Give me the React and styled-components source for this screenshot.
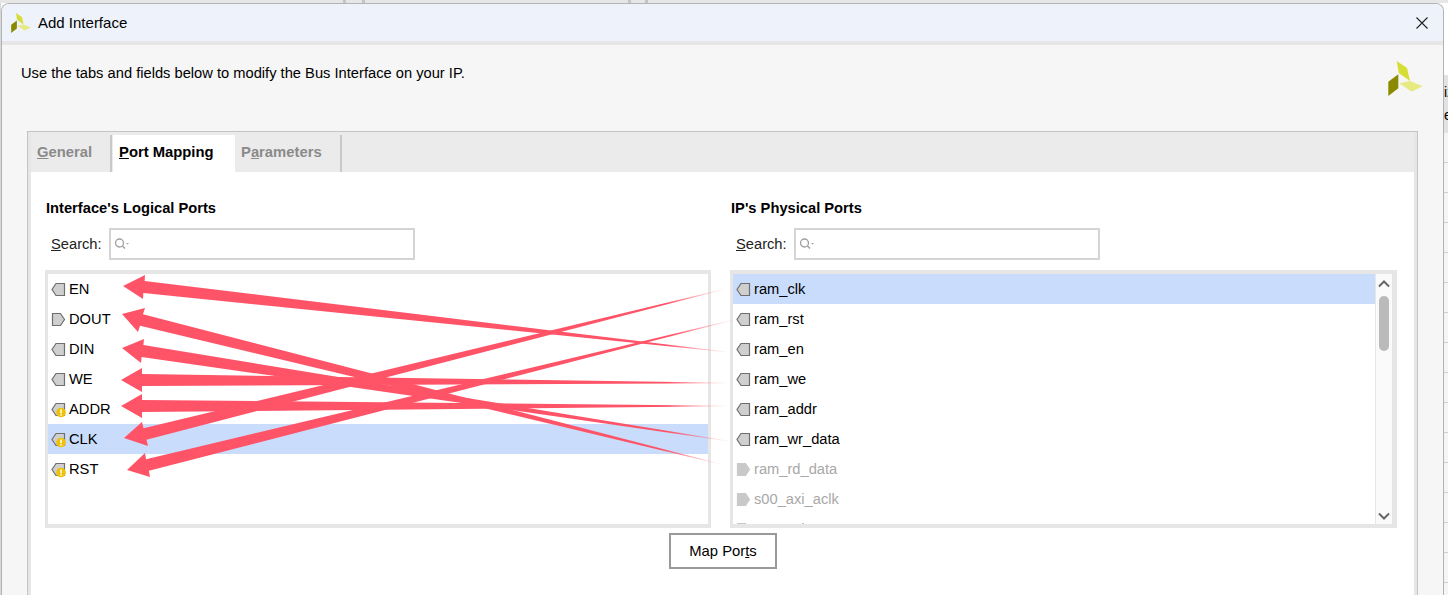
import React from "react";
import styled, { createGlobalStyle } from "styled-components";

const leftPorts = [
  { name: "EN" },
  { name: "DOUT", out: true },
  { name: "DIN" },
  { name: "WE" },
  { name: "ADDR", warn: true },
  { name: "CLK", warn: true, selected: true },
  { name: "RST", warn: true },
];

const rightPorts = [
  { name: "ram_clk", selected: true },
  { name: "ram_rst" },
  { name: "ram_en" },
  { name: "ram_we" },
  { name: "ram_addr" },
  { name: "ram_wr_data" },
  { name: "ram_rd_data", out: true, disabled: true },
  { name: "s00_axi_aclk", out: true, disabled: true },
  { name: "s00_axi_aresetn", out: true, disabled: true },
];

// tip, the two back corners of the head, and the far end of the tail
const arrows = [
  { tip: [123, 286], a: [145, 275], b: [143, 299], end: [727, 352] },
  { tip: [122, 314], a: [145, 308], b: [138, 332], end: [720, 464] },
  { tip: [122, 348], a: [144, 339], b: [141, 363], end: [728, 441] },
  { tip: [121, 380], a: [142, 368], b: [142, 392], end: [727, 383] },
  { tip: [121, 406], a: [142, 394], b: [142, 418], end: [727, 406] },
  { tip: [124, 438], a: [142, 422], b: [148, 446], end: [725, 289] },
  { tip: [127, 470], a: [145, 453], b: [150, 477], end: [733, 320] },
];

function arrowPoints({ tip, a, b, end }) {
  const mid = [(a[0] + b[0]) / 2, (a[1] + b[1]) / 2];
  const dx = end[0] - mid[0];
  const dy = end[1] - mid[1];
  const len = Math.hypot(dx, dy);
  const nx = -dy / len;
  const ny = dx / len;
  const neck = 6;
  const tail = 0.25;
  const pts = [
    tip,
    a,
    [mid[0] - nx * neck, mid[1] - ny * neck],
    [end[0] - nx * tail, end[1] - ny * tail],
    [end[0] + nx * tail, end[1] + ny * tail],
    [mid[0] + nx * neck, mid[1] + ny * neck],
    b,
  ];
  return pts.map((p) => p.join(",")).join(" ");
}

function Arrows() {
  return (
    <ArrowLayer viewBox="0 0 1448 595">
      <defs>
        {arrows.map((item, i) => {
          const fadeX = item.end[0] - (item.end[0] - item.tip[0]) * 0.1;
          const fadeY = item.end[1] - (item.end[1] - item.tip[1]) * 0.1;
          return (
            <linearGradient
              key={i}
              id={`fade${i}`}
              gradientUnits="userSpaceOnUse"
              x1={fadeX}
              y1={fadeY}
              x2={item.end[0]}
              y2={item.end[1]}
            >
              <stop offset="0" stopColor="#ff5468" />
              <stop offset="1" stopColor="#ff5468" stopOpacity="0.05" />
            </linearGradient>
          );
        })}
      </defs>
      {arrows.map((item, i) => (
        <polygon key={i} points={arrowPoints(item)} fill={`url(#fade${i})`} />
      ))}
    </ArrowLayer>
  );
}

function Logo({ size }) {
  return (
    <svg width={size} height={size} viewBox="1388 61 35 35">
      <polygon points="1396.7,61 1407,68 1410,81 1398.7,73" fill="#d6de33" />
      <polygon points="1388.3,81.7 1398.3,74.3 1398.3,88.3 1388.3,96" fill="#8a8a00" />
      <polygon points="1399.3,83.3 1410,81 1422.7,86.3 1411.7,91.7" fill="#e6ea80" />
    </svg>
  );
}

function PortIcon({ out, warn, disabled }) {
  const points = out ? "1.5,1.5 9.5,1.5 13.5,7.5 9.5,13.5 1.5,13.5" : "13.5,1.5 5,1.5 1,7.5 5,13.5 13.5,13.5";
  return (
    <IconBox>
      <svg width="16" height="16" viewBox="0 0 16 16">
        <polygon
          points={points}
          fill={disabled ? "#c9c9c9" : "#cfcfcf"}
          stroke={disabled ? "#c9c9c9" : "#6f6f6f"}
          strokeWidth="1.2"
        />
        {warn && (
          <g>
            <circle cx="10" cy="10.5" r="4.8" fill="#eec208" />
            <rect x="9.3" y="7.5" width="1.5" height="3.8" fill="#fff" />
            <rect x="9.3" y="12.2" width="1.5" height="1.5" fill="#fff" />
          </g>
        )}
      </svg>
    </IconBox>
  );
}

function PortRow({ port }) {
  return (
    <Row $selected={port.selected} $disabled={port.disabled}>
      <PortIcon out={port.out} warn={port.warn} disabled={port.disabled} />
      {port.name}
    </Row>
  );
}

function SearchRow() {
  return (
    <SearchLine>
      <SearchLabel>
        <u>S</u>earch:
      </SearchLabel>
      <SearchBox>
        <svg width="16" height="14" viewBox="0 0 16 14">
          <circle cx="5.5" cy="6" r="4" fill="none" stroke="#a0a0a0" strokeWidth="1.3" />
          <line x1="8.5" y1="9" x2="11" y2="11.5" stroke="#a0a0a0" strokeWidth="1.5" />
          <polygon points="12,6 15,6 13.5,7.5" fill="#a0a0a0" />
        </svg>
      </SearchBox>
    </SearchLine>
  );
}

function App() {
  return (
    <Page>
      <GlobalStyle />
      <TopStrip>
        <Tick $at={343} />
        <Tick $at={362} />
        <Tick $at={628} />
        <Tick $at={645} />
      </TopStrip>
      <Middle>
        <LeftSliver />
        <Dialog>
          <TitleBar>
            <TitleLeft>
              <Logo size={20} />
              <Title>Add Interface</Title>
            </TitleLeft>
            <svg width="14" height="14" viewBox="0 0 14 14">
              <path d="M1.5 1.5 L12.5 12.5 M12.5 1.5 L1.5 12.5" stroke="#222" strokeWidth="1.1" fill="none" />
            </svg>
          </TitleBar>
          <Body>
            <Intro>
              <IntroText>Use the tabs and fields below to modify the Bus Interface on your IP.</IntroText>
              <Logo size={35} />
            </Intro>
            <Pane>
              <TabStrip>
                <Tab>
                  <u>G</u>eneral
                </Tab>
                <Tab $active>
                  <u>P</u>ort Mapping
                </Tab>
                <Tab $last>
                  P<u>a</u>rameters
                </Tab>
              </TabStrip>
              <Content>
                <Columns>
                  <div>
                    <ColumnTitle>Interface's Logical Ports</ColumnTitle>
                    <SearchRow />
                    <ListFrame>
                      <RowList>
                        {leftPorts.map((port) => (
                          <PortRow key={port.name} port={port} />
                        ))}
                      </RowList>
                    </ListFrame>
                  </div>
                  <div>
                    <ColumnTitle>IP's Physical Ports</ColumnTitle>
                    <SearchRow />
                    <ListFrame>
                      <RowList>
                        {rightPorts.map((port) => (
                          <PortRow key={port.name} port={port} />
                        ))}
                      </RowList>
                      <ScrollTrack>
                        <svg width="14" height="10" viewBox="0 0 14 10">
                          <path d="M2 7.5 L7 2.5 L12 7.5" stroke="#666" strokeWidth="2" fill="none" />
                        </svg>
                        <ScrollThumb />
                        <svg width="14" height="10" viewBox="0 0 14 10">
                          <path d="M2 2.5 L7 7.5 L12 2.5" stroke="#666" strokeWidth="2" fill="none" />
                        </svg>
                      </ScrollTrack>
                    </ListFrame>
                  </div>
                </Columns>
                <ButtonLine>
                  <MapButton>
                    Map Por<u>t</u>s
                  </MapButton>
                </ButtonLine>
              </Content>
            </Pane>
          </Body>
        </Dialog>
        <RightSliver>
          <BehindBlank />
          <BehindText>
            <span>iz</span>
            <span>e</span>
          </BehindText>
          <BehindRows>
            {Array.from({ length: 15 }).map((_, i) => (
              <BehindRow key={i} />
            ))}
          </BehindRows>
        </RightSliver>
      </Middle>
      <Arrows />
    </Page>
  );
}

export default App;

const GlobalStyle = createGlobalStyle`
  html, body {
    margin: 0;
    padding: 0;
    background: #fff;
  }
  * {
    box-sizing: border-box;
  }
`;
const Page = styled.div`
  position: relative;
  width: 1448px;
  height: 595px;
  overflow: hidden;
  display: flex;
  flex-direction: column;
  font-family: "Liberation Sans", Arial, sans-serif;
  font-size: 14.7px;
  color: #000;
`;
const TopStrip = styled.div`
  position: relative;
  height: 3px;
  flex: none;
  background: #e6e6e6;
`;
const Tick = styled.div`
  position: absolute;
  top: 0;
  left: ${(p) => p.$at}px;
  width: 3px;
  height: 3px;
  background: #c4c4c4;
`;
const Middle = styled.div`
  flex: 1;
  display: flex;
  min-height: 0;
`;
const LeftSliver = styled.div`
  width: 1px;
  flex: none;
  background: #d8d8d8;
`;
const Dialog = styled.div`
  width: 1443px;
  flex: none;
  display: flex;
  flex-direction: column;
  background: #f6f6f6;
  border: 1px solid #b4b4b4;
  border-bottom: none;
  border-radius: 8px 8px 0 0;
  overflow: hidden;
`;
const TitleBar = styled.div`
  height: 37px;
  flex: none;
  display: flex;
  align-items: center;
  justify-content: space-between;
  padding: 0 14px 0 9px;
  background: #eef2fb;
`;
const TitleLeft = styled.div`
  display: flex;
  align-items: center;
  gap: 7px;
`;
const Title = styled.div`
  font-size: 15px;
`;
const Body = styled.div`
  flex: 1;
  min-height: 0;
  border-top: 4px solid #e6e6e6;
  padding-top: 16px;
`;
const Intro = styled.div`
  height: 70px;
  display: flex;
  align-items: flex-start;
  justify-content: space-between;
  padding: 0 20px 0 19px;
`;
const IntroText = styled.div`
  margin-top: 3px;
  line-height: 18px;
`;
const Pane = styled.div`
  width: 1391px;
  height: 470px;
  margin-left: 25px;
  border: 1px solid #c4c4c4;
  background: #e6e6e6;
  padding: 0 3px;
`;
const TabStrip = styled.div`
  height: 40px;
  display: flex;
  align-items: flex-end;
  background: #ebebeb;
`;
const Tab = styled.div`
  height: 37px;
  display: flex;
  align-items: center;
  font-weight: bold;
  font-size: 14.8px;
  white-space: pre;
  padding: 0 0 4px 6px;
  margin-left: ${(p) => (p.$active ? "1px" : "0")};
  width: ${(p) => (p.$active ? "122px" : p.$last ? "107px" : "81px")};
  color: ${(p) => (p.$active ? "#000" : "#8a8a8a")};
  background: ${(p) => (p.$active ? "#fff" : "transparent")};
  border-right: ${(p) => (p.$active ? "none" : "2px solid #c8c8c8")};
`;
const Content = styled.div`
  height: 430px;
  background: #fff;
  padding: 28px 17px 0 14px;
`;
const Columns = styled.div`
  display: grid;
  grid-template-columns: 666px 667px;
  gap: 19px;
`;
const ColumnTitle = styled.div`
  font-weight: bold;
  line-height: 16px;
  margin-left: 1px;
`;
const SearchLine = styled.div`
  display: flex;
  align-items: center;
  gap: 8px;
  margin: 12px 0 10px 6px;
`;
const SearchLabel = styled.div`
  width: 50px;
  white-space: nowrap;
  color: #222;
`;
const SearchBox = styled.div`
  width: 306px;
  height: 32px;
  border: 2px solid #d4d4d4;
  background: #fff;
  display: flex;
  align-items: center;
  padding-left: 3px;
`;
const ListFrame = styled.div`
  height: 258px;
  border: 4px solid #e6e6e6;
  border-left-width: 3px;
  border-right-width: 3px;
  display: flex;
  overflow: hidden;
`;
const RowList = styled.div`
  flex: 1;
  min-width: 0;
  height: 100%;
  overflow: hidden;
`;
const Row = styled.div`
  height: 30px;
  flex: none;
  display: flex;
  align-items: center;
  padding-left: 3px;
  background: ${(p) => (p.$selected ? "#c9dcfb" : "transparent")};
  color: ${(p) => (p.$disabled ? "#a8a8a8" : "#000")};
`;
const IconBox = styled.span`
  width: 18px;
  height: 16px;
  flex: none;
  display: flex;
  margin-top: 2px;
`;
const ScrollTrack = styled.div`
  width: 19px;
  flex: none;
  background: #fafafa;
  border-left: 1px solid #e6e6e6;
  border-right: 2px solid #e6e6e6;
  display: flex;
  flex-direction: column;
  align-items: center;
  padding: 5px 0 3px;
`;
const ScrollThumb = styled.div`
  width: 10px;
  height: 55px;
  margin-top: 7px;
  margin-bottom: auto;
  background: #bababa;
  border-radius: 5px;
`;
const ButtonLine = styled.div`
  display: flex;
  justify-content: center;
  padding-left: 4px;
  margin-top: 5px;
`;
const MapButton = styled.button`
  width: 108px;
  height: 36px;
  background: #fff;
  border: 2px solid #9a9a9a;
  border-radius: 0;
  font-family: inherit;
  font-size: 14.8px;
  color: #000;
  padding: 0;
`;
const RightSliver = styled.div`
  flex: 1;
  min-width: 0;
  display: flex;
  flex-direction: column;
  overflow: hidden;
`;
const BehindBlank = styled.div`
  height: 72px;
  flex: none;
  background: #fff;
`;
const BehindText = styled.div`
  height: 58px;
  flex: none;
  background: #e2e2e2;
  display: flex;
  flex-direction: column;
  gap: 5px;
  padding-top: 8px;
  font-size: 14px;
  line-height: 18px;
  white-space: nowrap;
  overflow: hidden;
`;
const BehindRows = styled.div`
  flex: 1;
  background: #f5f5f5;
`;
const BehindRow = styled.div`
  height: 30px;
  border-bottom: 1px solid #cfcfcf;
`;
const ArrowLayer = styled.svg`
  position: absolute;
  left: 0;
  top: 0;
  width: 1448px;
  height: 595px;
  pointer-events: none;
`;
